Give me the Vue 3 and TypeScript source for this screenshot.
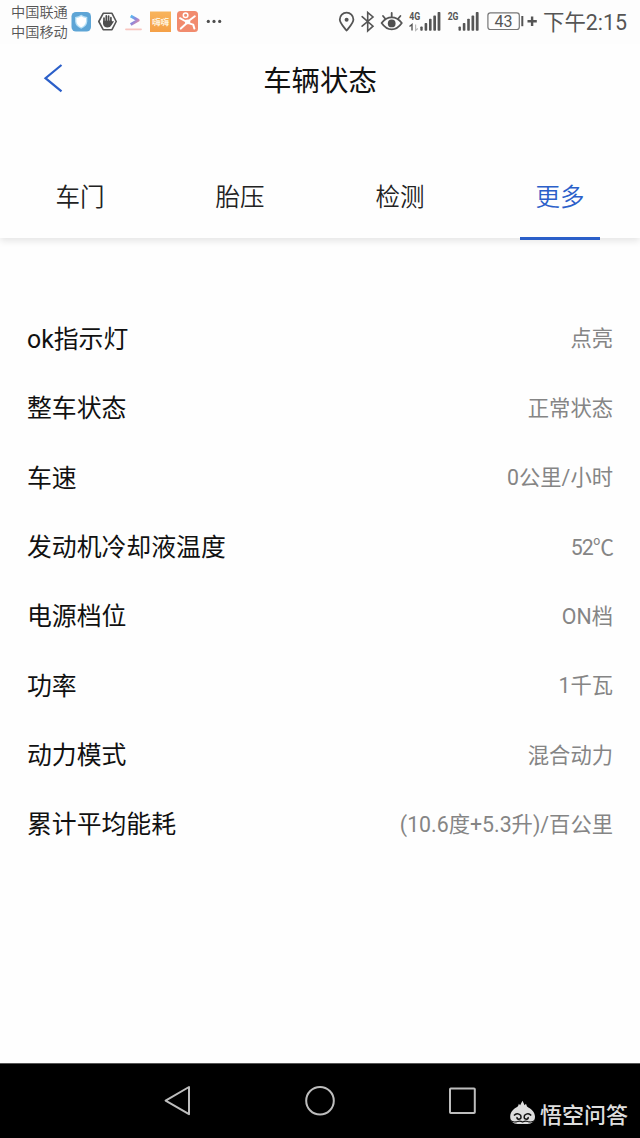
<script setup lang="ts">
interface StatusRow {
  label: string
  value: string
  compact?: boolean
}

const tabs: string[] = ['车门', '胎压', '检测', '更多']
const activeTab = '更多'

const rows: StatusRow[] = [
  { label: 'ok指示灯', value: '点亮' },
  { label: '整车状态', value: '正常状态' },
  { label: '车速', value: '0公里/小时' },
  { label: '发动机冷却液温度', value: '52℃', compact: true },
  { label: '电源档位', value: 'ON档' },
  { label: '功率', value: '1千瓦' },
  { label: '动力模式', value: '混合动力' },
  { label: '累计平均能耗', value: '(10.6度+5.3升)/百公里' },
]
</script>

<template>
  <div class="screen">
    <div class="statusbar">
      <div class="carriers">
        <span>中国联通</span>
        <span>中国移动</span>
      </div>
      <svg class="apps" width="156" height="44" viewBox="68 0 156 44">
        <defs>
          <linearGradient id="arrowFill" x1="0" y1="0" x2="1" y2="1">
            <stop offset="0" stop-color="#55bdf4" />
            <stop offset="0.5" stop-color="#8c88dc" />
            <stop offset="1" stop-color="#f08a9c" />
          </linearGradient>
          <linearGradient id="orangeTile" x1="0" y1="0" x2="0" y2="1">
            <stop offset="0" stop-color="#f8b45c" />
            <stop offset="1" stop-color="#f5a047" />
          </linearGradient>
        </defs>
        <rect x="71.5" y="12" width="19.5" height="19.5" rx="4.5" fill="#5da5d6" />
        <path d="M81.2 14.8Q84 16.8 87.3 17V21.5Q87 26.2 81.2 28.8Q75.4 26.2 75.1 21.5V17Q78.4 16.8 81.2 14.8Z" fill="#b7e0f6" />
        <path d="M81.2 16.3Q83.5 17.8 86 18V21.5Q85.6 25.3 81.2 27.2Q76.8 25.3 76.4 21.5V18Q78.9 17.8 81.2 16.3Z" fill="#fff" />
        <path d="M103.2 13.3H112L116.2 21.5L112 29.7H103.2L98.8 21.5Z" fill="none" stroke="#555" stroke-width="1.6" stroke-linejoin="round" />
        <path d="M104 23.5V18M106.3 23V15.9M108.6 23V16M110.9 23.5V17.7" stroke="#4e4e4e" stroke-width="1.7" stroke-linecap="round" />
        <path d="M103.1 20.8V23.8Q103.5 27.6 107.5 27.6Q110.4 27.5 111.4 25.2L113.9 21.4Q113.2 20.3 111.8 21.6V20.6Z" fill="#4e4e4e" />
        <path d="M130.7 16L138.2 20.3L130.7 24.5" fill="none" stroke="url(#arrowFill)" stroke-width="3" stroke-linejoin="round" />
        <path d="M126 29.3H141" stroke="#f7a197" stroke-width="1.8" stroke-linecap="round" opacity="0.6" />
        <rect x="150" y="11.5" width="21" height="20.5" fill="url(#orangeTile)" />
        <text x="160.5" y="24.8" text-anchor="middle" class="tile-text">嗨嗨</text>
        <rect x="177" y="11" width="21" height="21" rx="3.5" fill="#f18b6e" />
        <circle cx="185.6" cy="15.2" r="2.3" fill="none" stroke="#fff" stroke-width="1.5" />
        <path d="M180 18.2L185 21L189.5 20.3L194.8 16.3M186.5 21.2L185.8 24L180.8 28.6M189.3 20.8L189.2 23.4L193.2 24.6L194.4 28.6" fill="none" stroke="#fff" stroke-width="2" stroke-linecap="round" stroke-linejoin="round" />
        <path d="M185 20.5L189.8 20L189.4 24L185.6 24.4Z" fill="#fff" />
        <g fill="#4e4e4e">
          <circle cx="208.3" cy="21.4" r="1.6" />
          <circle cx="214" cy="21.4" r="1.6" />
          <circle cx="219.7" cy="21.4" r="1.6" />
        </g>
      </svg>
      <svg class="signals" width="204" height="44" viewBox="336 0 204 44">
        <g fill="none" stroke="#555" stroke-width="1.8" stroke-linejoin="round" stroke-linecap="round">
          <path d="M346.6 30.5C343 26 339.8 23 339.8 19.5A6.8 6.8 0 0 1 353.4 19.5C353.4 23 350.2 26 346.6 30.5Z" />
          <path d="M362.1 16.7L373 26.2L367.7 31V12.4L373 17L362.1 26.2" stroke-linejoin="miter" stroke-width="1.6" />
          <path d="M381.6 23Q386 17.4 391.7 17.4Q397.4 17.4 401.8 23Q397.4 29.4 391.7 29.4Q386 29.4 381.6 23Z" />
          <path d="M383 16L385.3 18.8M391.7 13V16.8M400.4 16L398.1 18.8" />
        </g>
        <circle cx="346.6" cy="19.7" r="2" fill="#555" />
        <circle cx="391.7" cy="23.4" r="3.9" fill="#505050" />
        <text x="409.2" y="19.8" class="net" textLength="11" lengthAdjust="spacingAndGlyphs">4G</text>
        <text x="447.7" y="19.8" class="net" textLength="10.8" lengthAdjust="spacingAndGlyphs">2G</text>
        <path d="M409.5 26.5L412 24.5V30.5" fill="none" stroke="#555" stroke-width="1.4" />
        <path d="M415.6 24.5V30.5L417.8 28.5" fill="none" stroke="#b8b8b8" stroke-width="1.2" />
        <g fill="#555">
          <rect x="420.3" y="26.5" width="2.4" height="4.3" rx="0.8" />
          <rect x="424.6" y="23" width="2.6" height="7.8" rx="0.8" />
          <rect x="429" y="18.8" width="2.6" height="12" rx="0.8" />
          <rect x="433.3" y="15.6" width="2.7" height="15.2" rx="0.8" />
          <rect x="437.6" y="12" width="2.8" height="18.8" rx="0.8" />
          <rect x="458.5" y="26.5" width="2.4" height="4.3" rx="0.8" />
          <rect x="462.8" y="23" width="2.6" height="7.8" rx="0.8" />
          <rect x="467.2" y="18.8" width="2.6" height="12" rx="0.8" />
          <rect x="471.5" y="15.6" width="2.7" height="15.2" rx="0.8" />
          <rect x="475.8" y="12" width="2.8" height="18.8" rx="0.8" />
        </g>
        <rect x="487.9" y="12.9" width="31.4" height="16.6" rx="2.5" fill="none" stroke="#777" stroke-width="1.2" />
        <text x="503.6" y="26.6" text-anchor="middle" class="battery">43</text>
        <path d="M522.3 16V26.2" stroke="#555" stroke-width="2" />
        <path d="M527.5 21.2H536.8M532.1 16.5V25.9" stroke="#555" stroke-width="2.4" />
      </svg>
      <div class="clock">下午2:15</div>
    </div>

    <header class="header">
      <svg class="back" width="24" height="34" viewBox="0 0 24 34">
        <path d="M20.5 3L4.5 16.2L20.5 29.4" fill="none" stroke="#2b5fc9" stroke-width="2.2" />
      </svg>
      <h1 class="title">车辆状态</h1>
    </header>

    <nav class="tabs">
      <div v-for="tab in tabs" :key="tab" class="tab" :class="{ active: tab === activeTab }">
        <span>{{ tab }}</span>
      </div>
    </nav>

    <main class="rows">
      <div v-for="row in rows" :key="row.label" class="row">
        <span class="label">{{ row.label }}</span>
        <span class="value" :class="{ compact: row.compact }">{{ row.value }}</span>
      </div>
    </main>

    <footer class="navbar">
      <svg class="keys" width="320" height="74" viewBox="160 1064 320 74">
        <g fill="none" stroke="#bdbdbd" stroke-width="2" stroke-linejoin="round">
          <path d="M165.6 1100.6L189 1087V1114.2Z" />
          <circle cx="320" cy="1100.7" r="13.8" />
          <rect x="450" y="1088.4" width="24.8" height="24.6" rx="0.8" />
        </g>
      </svg>
      <div class="brand">
        <svg width="28" height="26" viewBox="0 0 28 26">
          <path d="M1.2 16.8C1.2 10.5 5.5 8.8 9 6.2L9.9 3.8L11.1 5.2L13.5 .8L15.6 5.2L17 3.8L18 6.4C21.5 8.8 26 11 26 16.8C26 21.2 22.8 24 18.5 24H8.7C4.2 24 1.2 21.2 1.2 16.8Z" fill="#dedede" />
          <path d="M5 15.5Q8 12 11.6 15.2Q13 19 9.8 19.2Q7.4 18.9 8.2 17M22.2 15.5Q19.2 12 15.6 15.2Q14.2 19 17.4 19.2Q19.8 18.9 19 17" fill="none" stroke="#111" stroke-width="1.5" />
          <path d="M.8 20Q4.3 23 8.5 21.5Q11 20.5 13.6 22Q16.2 20.5 18.7 21.5Q22.9 23 26.4 20" fill="none" stroke="#111" stroke-width="1.1" />
        </svg>
        <span>悟空问答</span>
      </div>
    </footer>
  </div>
</template>

<style>
body {
  margin: 0;
  background: #fefefe;
}
</style>

<style scoped>
.screen {
  width: 640px;
  height: 1138px;
  display: flex;
  flex-direction: column;
  overflow: hidden;
  background: #fefefe;
  color: #111;
  font-family: Roboto, "Noto Sans CJK SC", sans-serif;
  font-weight: 400;
}
.statusbar {
  height: 44px;
  flex: none;
  display: flex;
  background: #fdfdfd;
  color: #555;
}
.carriers {
  width: 57px;
  padding: 3px 0 0 11px;
  display: flex;
  flex-direction: column;
  font-size: 14.2px;
  font-weight: 350;
  line-height: 19.5px;
  white-space: nowrap;
}
.apps,
.signals {
  flex: none;
}
.signals {
  margin-left: 112px;
}
.tile-text {
  font-size: 8.5px;
  font-weight: 700;
  fill: #fff3df;
}
.net {
  font-size: 10.5px;
  font-weight: 700;
  fill: #555;
}
.battery {
  font-size: 16px;
  fill: #555;
}
.clock {
  margin-left: 3px;
  font-size: 21.4px;
  line-height: 45px;
  white-space: nowrap;
}
.header {
  height: 70px;
  flex: none;
  display: grid;
  grid-template-columns: 100px 1fr 100px;
  align-items: center;
}
.back {
  margin-left: 41px;
}
.title {
  margin: 0;
  padding-top: 5px;
  text-align: center;
  font-size: 28.4px;
  line-height: 40px;
  font-weight: 400;
}
.tabs {
  height: 84px;
  flex: none;
  margin-top: 40px;
  display: grid;
  grid-template-columns: repeat(4, 1fr);
  background: #fefefe;
  box-shadow: 0 3px 7px rgba(0, 0, 0, 0.1);
  clip-path: inset(0 0 -14px 0);
}
.tab {
  height: 86px;
  display: flex;
  flex-direction: column;
  align-items: center;
  color: #222;
  font-size: 24.5px;
  font-weight: 350;
  line-height: 87px;
}
.tab span {
  height: 83px;
}
.tab.active {
  color: #2b5fc9;
}
.tab.active::after {
  content: "";
  width: 80px;
  height: 3px;
  background: #2b5fc9;
}
.rows {
  flex: 1;
  padding: 64.3px 27px 0;
}
.row {
  height: 69.35px;
  display: flex;
  align-items: center;
  justify-content: space-between;
}
.label {
  font-size: 24.85px;
}
.value {
  font-size: 21.3px;
  color: #858585;
}
.value.compact {
  letter-spacing: -1px;
}
.navbar {
  height: 75px;
  flex: none;
  box-sizing: border-box;
  display: flex;
  background: #000;
  border-top: 1px solid #555;
}
.keys {
  flex: none;
  margin-left: 160px;
}
.brand {
  display: flex;
  align-items: center;
  margin: 26px 0 0 29px;
  height: 46px;
  gap: 3px;
  color: #dedede;
  font-size: 22px;
  font-weight: 500;
  white-space: nowrap;
}
</style>
